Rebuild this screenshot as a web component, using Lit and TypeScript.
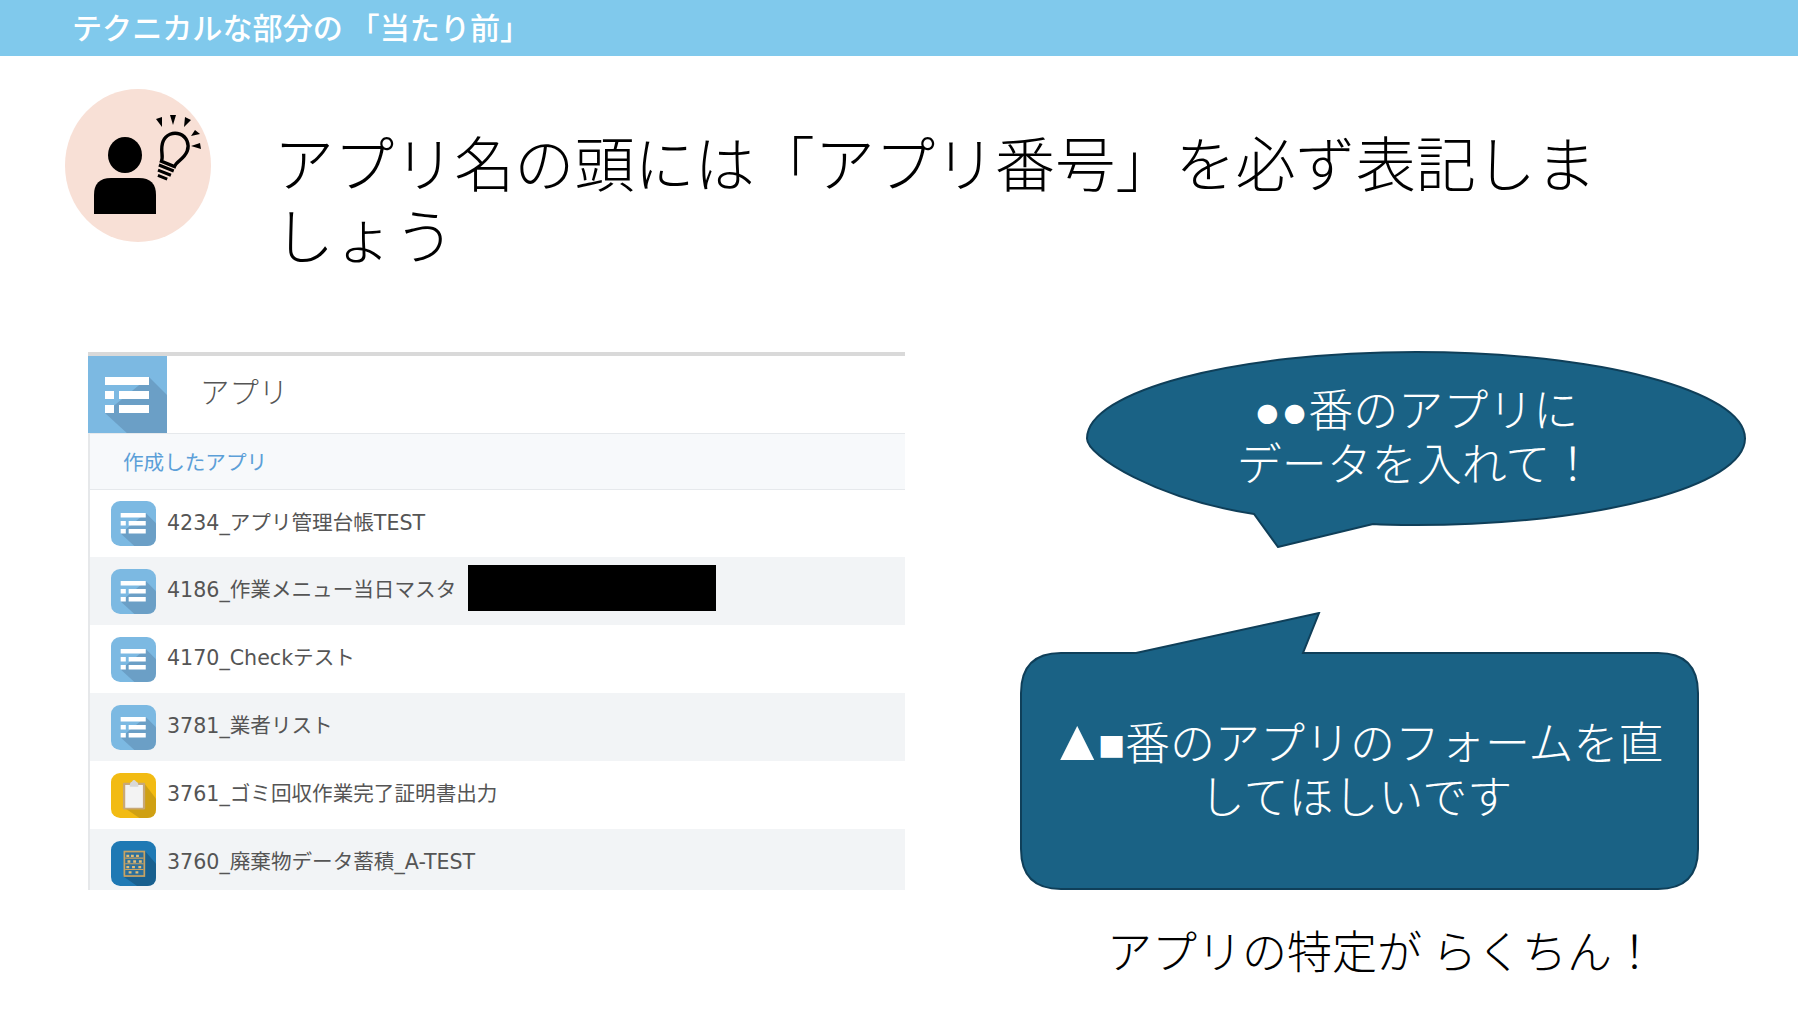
import { LitElement, html, css, svg } from "lit";
import { customElement } from "lit/decorators.js";

const listGlyph = (bg: string, shadow: string, rx: number) => svg`
  <rect width="79" height="79" rx=${rx} fill=${bg}></rect>
  <path d="M61 21 L79 39 V${79 - rx} Q79 79 ${79 - rx} 79 H41 L17 57 Z" fill=${shadow}></path>
  <path d="M17 21H61V29H17Z M17 35H26V43H17Z M31 35H61V43H31Z M17 49H26V57H17Z M31 49H61V57H31Z" fill="#fff"></path>`;

const listIcon = () => html`<svg class="ico" viewBox="0 0 79 79">${listGlyph("#7cb9e2", "#6b9fc6", 16)}</svg>`;

const clipIcon = () => html`<svg class="ico" viewBox="0 0 79 79">
  <rect width="79" height="79" rx="16" fill="#f2bb13"></rect>
  <path d="M60 20 L79 45 V63 Q79 79 63 79 H50 L22 60 Z" fill="#cfa013"></path>
  <rect x="21" y="17" width="39" height="47" rx="2" fill="#c8a877"></rect>
  <rect x="25" y="21" width="31" height="40" fill="#f3f3f3"></rect>
  <path d="M33 21 Q33 16 37 15 Q40 10 44 15 Q48 16 48 21 V24 H33Z" fill="#d8d8d8"></path>
</svg>`;

const abacusIcon = () => html`<svg class="ico" viewBox="0 0 79 79">
  <rect width="79" height="79" rx="16" fill="#1f79b4"></rect>
  <path d="M60 18 L79 40 V63 Q79 79 63 79 H46 L21 62 Z" fill="#19608f"></path>
  <rect x="22" y="17" width="38" height="46" fill="#c9a362"></rect>
  <rect x="25" y="20" width="32" height="40" fill="#2d6f9b"></rect>
  <path d="M25 30H57 M25 40H57 M25 50H57" stroke="#c9a362" stroke-width="2"></path>
  <path d="M27 24h5v4h-5z M35 24h5v4h-5z M44 24h5v4h-5z M29 34h5v4h-5z M39 34h5v4h-5z M49 34h5v4h-5z M27 44h5v4h-5z M37 44h5v4h-5z M48 44h5v4h-5z M31 53h5v4h-5z M43 53h5v4h-5z" fill="#e2bd75"></path>
</svg>`;

const rows = [
  { t: "4234_アプリ管理台帳TEST", i: listIcon },
  { t: "4186_作業メニュー当日マスタ", i: listIcon, hidden: true },
  { t: "4170_Checkテスト", i: listIcon },
  { t: "3781_業者リスト", i: listIcon },
  { t: "3761_ゴミ回収作業完了証明書出力", i: clipIcon },
  { t: "3760_廃棄物データ蓄積_A-TEST", i: abacusIcon },
];

@customElement("app-root")
export class AppRoot extends LitElement {
  static styles = css`
    :host {
      display: block;
      width: 1798px;
      height: 1012px;
      overflow: hidden;
      background: #fff;
      color: #000;
      font-family: "Noto Sans CJK JP", "Noto Sans", sans-serif;
    }
    .topbar {
      height: 56px;
      background: #80c9ec;
      color: #fff;
      font-size: 30.1px;
      font-weight: 500;
      line-height: 53px;
      padding-left: 72px;
      white-space: pre;
    }
    .hero {
      display: flex;
      align-items: flex-start;
      padding: 33px 0 0 65px;
      height: 153px;
    }
    .avatar {
      width: 146px;
      height: 153px;
      flex: none;
      display: block;
    }
    h1 {
      margin: 36px 0 0 63px;
      width: 1350px;
      font-size: 60.1px;
      line-height: 72px;
      font-weight: 300;
    }
    .main {
      display: flex;
      align-items: flex-start;
      margin-top: 110px;
      padding-left: 88px;
    }
    .panel {
      width: 817px;
      height: 538px;
      flex: none;
      overflow: hidden;
      border-top: 4px solid #d9d9d9;
      box-sizing: border-box;
      color: #555;
    }
    .panel-head {
      display: flex;
      align-items: center;
      height: 77px;
      border-bottom: 1px solid #e6e9ec;
    }
    .panel-head svg {
      width: 79px;
      height: 77px;
      display: block;
      flex: none;
    }
    .panel-head span {
      margin-left: 33px;
      padding-bottom: 10px;
      font-size: 29.4px;
      font-weight: 300;
      color: #555;
    }
    .sub {
      height: 55px;
      line-height: 55px;
      padding-left: 33px;
      background: #f7f9fb;
      border-bottom: 1px solid #e6e9ec;
      border-left: 2px solid #e6e8ea;
      color: #5c9fd8;
      font-size: 20.6px;
    }
    .list {
      border-left: 2px solid #e6e8ea;
    }
    .row {
      position: relative;
      display: flex;
      align-items: center;
      gap: 11px;
      height: 68px;
      padding-left: 21px;
      font-family: "DejaVu Sans", "Noto Sans CJK JP", sans-serif;
      font-size: 20.6px;
      white-space: nowrap;
    }
    .row span {
      padding-bottom: 6px;
    }
    .row:nth-child(even) {
      background: #f2f4f6;
    }
    .list .row:first-child {
      height: 67px;
    }
    .ico {
      width: 45px;
      height: 45px;
      flex: none;
      display: block;
    }
    .redact {
      position: absolute;
      left: 378px;
      top: 8px;
      width: 248px;
      height: 46px;
      background: #000;
    }
    .side {
      width: 800px;
      margin-left: 30px;
      margin-top: -1px;
      flex: none;
      color: #fff;
      font-size: 45px;
      line-height: 54px;
      font-weight: 300;
      text-align: center;
      padding-left: 85px;
      box-sizing: border-box;
    }
    .bubble {
      display: grid;
    }
    .bubble > * {
      grid-area: 1 / 1;
    }
    .bubble svg {
      display: block;
    }
    .oval {
      height: 197px;
      margin-left: 66px;
      width: 660px;
    }
    .oval .msg {
      padding-top: 30px;
      width: 660px;
    }
    .rect {
      margin-top: 64px;
      height: 278px;
      width: 680px;
    }
    .rect .msg {
      padding: 102px 8px 0 0;
      white-space: nowrap;
    }
    .sym {
      font-family: "Liberation Sans", "DejaVu Sans", sans-serif;
      line-height: 0;
    }
    .tri {
      font-size: 58px;
      letter-spacing: -8px;
    }
    .caption {
      color: #000;
      margin-top: 33px;
      padding-left: 44px;
      white-space: pre;
      width: 680px;
      box-sizing: border-box;
      text-align: center;
    }
  `;

  render() {
    return html`
      <div class="topbar">テクニカルな部分の 「当たり前」</div>
      <section class="hero">
        <svg class="avatar" viewBox="0 0 146 153">
          <ellipse cx="73" cy="76.5" rx="73" ry="76.5" fill="#f8e0d6"></ellipse>
          <ellipse cx="60" cy="66" rx="17" ry="18" fill="#000"></ellipse>
          <path d="M29 125 V106 Q29 89 46 89 H74 Q91 89 91 106 V125 Z" fill="#000"></path>
          <g transform="rotate(22 109 60)">
            <path d="M102 76 C102 70 96 66 96 57 A13 13 0 0 1 122 57 C122 66 116 70 116 76 Z" fill="none" stroke="#000" stroke-width="3.4"></path>
            <path d="M101 79h16v3h-16z M102 84h14v3h-14z M104 89h10v3h-10z" fill="#000"></path>
          </g>
          <path d="M91 30 L97 28 L97 38 Z M105 26 L111 26 L108 36 Z M120 28 L126 31 L119 38 Z M130 41 L135 45 L126 47 Z M135 54 L136 60 L126 57 Z" fill="#000"></path>
        </svg>
        <h1>アプリ名の頭には「アプリ番号」を必ず表記しましょう</h1>
      </section>
      <section class="main">
        <div class="panel">
          <div class="panel-head">
            <svg viewBox="0 0 79 77">${listGlyph("#7cb9e2", "#6b9fc6", 0)}</svg>
            <span>アプリ</span>
          </div>
          <div class="sub">作成したアプリ</div>
          <div class="list">
            ${rows.map(
              (r) => html`<div class="row">
                ${r.i()}<span>${r.t}</span>
                ${r.hidden ? html`<div class="redact"></div>` : ""}
              </div>`
            )}
          </div>
        </div>
        <div class="side">
          <div class="bubble oval">
            <svg width="660" height="197" viewBox="0 0 660 197">
              <path d="M168 163 C70 148 1 105 1 87.5 C1 40 148 1 330 1 C512 1 659 40 659 87.5 C659 135 512 174 330 174 C315 174 300 174 287 173 L192 196 Z" fill="#1a6285" stroke="#0f3f59" stroke-width="2"></path>
            </svg>
            <div class="msg"><span class="sym">●●</span>番のアプリに<br />データを入れて！</div>
          </div>
          <div class="bubble rect">
            <svg width="680" height="278" viewBox="0 0 680 278">
              <path d="M41 41 H116 L299 1 L283 41 H638 Q678 41 678 81 V237 Q678 277 638 277 H41 Q1 277 1 237 V81 Q1 41 41 41 Z" fill="#1a6285" stroke="#0f3f59" stroke-width="2"></path>
            </svg>
            <div class="msg"><span class="sym"><span class="tri">▲</span>■</span>番のアプリのフォームを直<br />してほしいです</div>
          </div>
          <div class="caption">アプリの特定が らくちん！</div>
        </div>
      </section>
    `;
  }
}
